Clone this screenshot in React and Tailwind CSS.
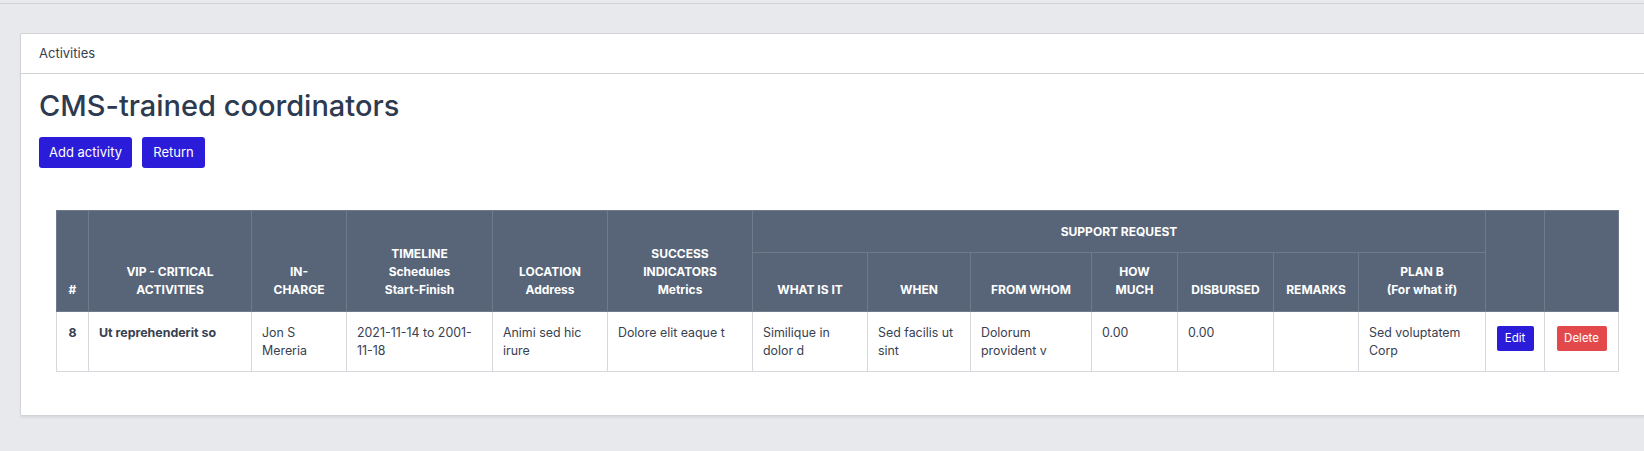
const columns = [
  { key: "num", width: 32 },
  { key: "vip", width: 163 },
  { key: "incharge", width: 95 },
  { key: "timeline", width: 146 },
  { key: "location", width: 115 },
  { key: "success", width: 145 },
  { key: "what", width: 115 },
  { key: "when", width: 103 },
  { key: "from", width: 121 },
  { key: "how", width: 86 },
  { key: "disbursed", width: 96 },
  { key: "remarks", width: 85 },
  { key: "planb", width: 127 },
  { key: "edit", width: 59 },
  { key: "delete", width: 74 },
];

const activity = {
  id: 8,
  name: "Ut reprehenderit so",
  inCharge: "Jon S Mereria",
  timeline: "2021-11-14 to 2001-11-18",
  location: "Animi sed hic irure",
  success: "Dolore elit eaque t",
  what: "Similique in dolor d",
  when: "Sed facilis ut sint",
  from: "Dolorum provident v",
  how: "0.00",
  disbursed: "0.00",
  remarks: "",
  planB: "Sed voluptatem Corp",
};

const th =
  "border border-[#6f7b8d] px-[10px] pb-[12px] pt-[10px] align-bottom text-center text-[12px] font-bold leading-[18px] text-white";
const td =
  "border border-[#d6d8de] px-[10px] pt-[12px] pb-[11px] align-top text-[12.4px] leading-[18px] text-[#374151]";

const App = () => {
  return (
    <div
      className="w-[1644px] h-[451px] overflow-hidden bg-[#e8e9ec]"
      style={{ fontFamily: "Inter, 'Noto Sans', sans-serif" }}
    >
      <div className="h-[4px] border-b border-[#d1d3d9]" />

      <div className="ml-[20px] mt-[29px] w-[1700px] bg-white border border-[#d1d3d9] rounded-[2px] shadow-[0_2px_2px_rgba(0,0,0,0.06)]">
        {/* header */}
        <div className="h-[40px] flex items-center px-[18px] border-b border-[#d1d3d9] text-[13px] text-[#374151]">
          Activities
        </div>

        {/* body */}
        <div className="px-[18px] pt-[14px] pb-[43px]">
          <h1 className="text-[29px] leading-[36px] font-medium text-[#2d3a4f]">
            CMS-trained coordinators
          </h1>

          <div className="flex gap-[10px] mt-[13px]">
            <button className="h-[31px] w-[93px] bg-[#2b1cd9] text-white text-[13px] rounded-[3px]">
              Add activity
            </button>
            <button className="h-[31px] w-[63px] bg-[#2b1cd9] text-white text-[13px] rounded-[3px]">
              Return
            </button>
          </div>

          <div className="mt-[42px] ml-[17px]">
            <table className="table-fixed border-collapse w-[1562px] border border-[#d6d8de]">
              <colgroup>
                {columns.map((c) => (
                  <col key={c.key} style={{ width: c.width }} />
                ))}
              </colgroup>
              <thead className="bg-[#586579]">
                <tr className="h-[42px]">
                  <th rowSpan={2} className={th}>#</th>
                  <th rowSpan={2} className={th}>VIP - CRITICAL ACTIVITIES</th>
                  <th rowSpan={2} className={th}>IN-<br />CHARGE</th>
                  <th rowSpan={2} className={th}>
                    TIMELINE
                    <br />
                    Schedules
                    <br />
                    Start-Finish
                  </th>
                  <th rowSpan={2} className={th}>
                    LOCATION
                    <br />
                    Address
                  </th>
                  <th rowSpan={2} className={th}>
                    SUCCESS INDICATORS
                    <br />
                    Metrics
                  </th>
                  <th
                    colSpan={7}
                    className="border border-[#6f7b8d] text-center align-middle text-[12px] font-bold text-white"
                  >
                    SUPPORT REQUEST
                  </th>
                  <th rowSpan={2} className={th}></th>
                  <th rowSpan={2} className={th}></th>
                </tr>
                <tr className="h-[59px]">
                  <th className={th}>WHAT IS IT</th>
                  <th className={th}>WHEN</th>
                  <th className={th}>FROM WHOM</th>
                  <th className={th}>HOW<br />MUCH</th>
                  <th className={th}>DISBURSED</th>
                  <th className={th}>REMARKS</th>
                  <th className={th}>
                    PLAN B
                    <br />
                    (For what if)
                  </th>
                </tr>
              </thead>
              <tbody>
                <tr className="h-[59px]">
                  <td className={`${td} text-center font-bold`}>{activity.id}</td>
                  <td className={`${td} font-bold`}>{activity.name}</td>
                  <td className={td}>{activity.inCharge}</td>
                  <td className={td}>{activity.timeline}</td>
                  <td className={td}>{activity.location}</td>
                  <td className={td}>{activity.success}</td>
                  <td className={td}>{activity.what}</td>
                  <td className={td}>{activity.when}</td>
                  <td className={td}>{activity.from}</td>
                  <td className={td}>{activity.how}</td>
                  <td className={td}>{activity.disbursed}</td>
                  <td className={td}>{activity.remarks}</td>
                  <td className={td}>{activity.planB}</td>
                  <td className="border border-[#d6d8de] align-top pt-[12px] text-center">
                    <button className="h-[25px] w-[37px] bg-[#2b1cd9] text-white text-[11.5px] rounded-[2px]">
                      Edit
                    </button>
                  </td>
                  <td className="border border-[#d6d8de] align-top pt-[12px] text-center">
                    <button className="h-[25px] w-[50px] bg-[#e3494b] text-white text-[11.5px] rounded-[2px]">
                      Delete
                    </button>
                  </td>
                </tr>
              </tbody>
            </table>
          </div>
        </div>
      </div>
    </div>
  );
};

export default App;
